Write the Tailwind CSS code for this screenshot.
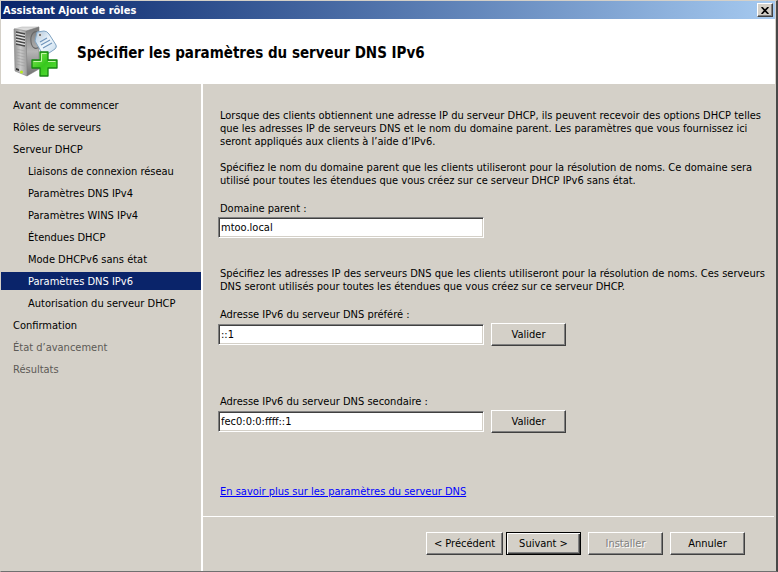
<!DOCTYPE html>
<html lang="fr">
<head>
<meta charset="utf-8">
<meta name="viewport" content="width=device-width, initial-scale=1">
<title>Assistant Ajout de rôles</title>
<script src="https://cdn.jsdelivr.net/npm/@tailwindcss/browser@4"></script>
</head>
<body class="bg-[#d4d0c8]">
<div class="flex min-h-screen flex-col border-t border-r-2 border-b border-l border-t-[#d4d0c8] border-r-[#484848] border-b-[#707070] border-l-[#d4d0c8] bg-[#d4d0c8] font-['DejaVu_Sans_Condensed','DejaVu_Sans',sans-serif] text-[11px] leading-[13px] text-black">
  <div class="mr-px flex h-[18px] items-center justify-between bg-linear-to-r from-[#0a246a] to-[#a6caf0] pr-[2px] pl-[2px] text-white">
    <span class="font-bold">Assistant Ajout de rôles</span>
    <button type="button" aria-label="Fermer" class="flex h-[14px] w-4 items-center justify-center border border-t-white border-r-[#404040] border-b-[#404040] border-l-white bg-[#d4d0c8] shadow-[inset_-1px_-1px_0_#808080]">
      <svg class="h-[7px] w-2" viewBox="0 0 8 7" fill="none" stroke="#000" stroke-width="1.7"><path d="M.6 0 7.4 7M7.4 0 .6 7"/></svg>
    </button>
  </div>

  <header class="mr-px flex h-[65px] items-center bg-white pl-[10px]">
    <svg class="h-[52px] w-12 shrink-0" viewBox="0 0 48 52">
      <defs>
        <linearGradient id="front" x1="0" x2="1"><stop offset="0" stop-color="#909090"/><stop offset=".5" stop-color="#c9c9c9"/><stop offset="1" stop-color="#9d9d9d"/></linearGradient>
        <linearGradient id="side" x1="0" x2="0" y1="0" y2="1"><stop offset="0" stop-color="#777"/><stop offset=".5" stop-color="#b5b5b5"/><stop offset="1" stop-color="#707070"/></linearGradient>
        <linearGradient id="plus" x1="0" x2="1" y1="0" y2="1"><stop offset="0" stop-color="#8bea5c"/><stop offset=".5" stop-color="#37c81d"/><stop offset="1" stop-color="#5ce23a"/></linearGradient>
        <linearGradient id="tag" x1="0" x2="1" y1="0" y2="1"><stop offset="0" stop-color="#a9c2d8"/><stop offset=".5" stop-color="#eef6fc"/><stop offset="1" stop-color="#c2d8ea"/></linearGradient>
      </defs>
      <path d="M3 3 11 1h17l-12 4z" fill="#dcdcdc" stroke="#aaa" stroke-width=".5"/>
      <path d="M15 5 28 1v42l-12 7z" fill="url(#side)" stroke="#777" stroke-width=".5"/>
      <path d="M3 3 15 5l1 45L4 45z" fill="url(#front)" stroke="#858585" stroke-width=".6"/>
      <path d="m5 6 9 2M5 9l9 2M5 12l9 2M5 15l9 2M5 18l9 2" stroke="#484848" stroke-width="1.4"/>
      <path d="m5 7.500 9 2M5 10.500l9 2M5 13.500l9 2M5 16.500l9 2" stroke="#efefef" stroke-width=".8"/>
      <path d="m5 23 9 2M5 26l9 2M5 29l9 2M5 32l9 2M5 35l9 2M5 38l9 2" stroke="#a1a1a1" stroke-width=".7"/>
      <path d="m5 42 3 1v2l-3-1z" fill="#333"/>
      <circle cx="10.500" cy="46" r="1.500" fill="#b9ed1b"/>
      <path d="M28 7c-5-4-9 2-8 9s6 8 9 4" fill="none" stroke="#686868" stroke-width="1.100"/>
      <path d="m26 6 7-1q3 0 5 3l7 11q1 2-1 4l-9 6q-2 1-4-2l-7-12z" fill="url(#tag)" stroke="#81a4c2" stroke-width="1" stroke-linejoin="round"/>
      <circle cx="29" cy="9" r="1.700" fill="#777" stroke="#fff" stroke-width=".6"/>
      <path d="m29 16 7-4M30 19l9-5M32 22l9-5" stroke="#7195bb" stroke-width="1.200"/>
      <path d="M29 26h8v8h9v8h-9v8h-8v-8h-8v-8h8z" fill="url(#plus)" stroke="#148510" stroke-width="1.300" stroke-linejoin="round"/>
      <path d="M30.500 35.500h-8M30.500 35.500v-8h5M37 35.500h7.500" fill="none" stroke="#c1f8a6" stroke-width="1"/>
    </svg>
    <h1 class="ml-[18px] pt-0.5 text-[15px] leading-5 font-bold">Spécifier les paramètres du serveur DNS IPv6</h1>
  </header>

  <div class="flex flex-1">
    <nav aria-label="Étapes" class="w-[200px] shrink-0 pt-3">
      <ul class="flex flex-col gap-1 leading-4 whitespace-nowrap">
        <li><a href="#" class="block pt-0.5 pl-3">Avant de commencer</a></li>
        <li><a href="#" class="block pt-0.5 pl-3">Rôles de serveurs</a></li>
        <li><a href="#" class="block pt-0.5 pl-3">Serveur DHCP</a></li>
        <li><a href="#" class="block pt-0.5 pl-[27px]">Liaisons de connexion réseau</a></li>
        <li><a href="#" class="block pt-0.5 pl-[27px]">Paramètres DNS IPv4</a></li>
        <li><a href="#" class="block pt-0.5 pl-[27px]">Paramètres WINS IPv4</a></li>
        <li><a href="#" class="block pt-0.5 pl-[27px]">Étendues DHCP</a></li>
        <li><a href="#" class="block pt-0.5 pl-[27px]">Mode DHCPv6 sans état</a></li>
        <li><a href="#" aria-current="step" class="block bg-[#0a246a] pt-0.5 pl-[27px] text-white">Paramètres DNS IPv6</a></li>
        <li><a href="#" class="block pt-0.5 pl-[27px]">Autorisation du serveur DHCP</a></li>
        <li><a href="#" class="block pt-0.5 pl-3">Confirmation</a></li>
        <li class="pt-0.5 pl-3 text-[#5c5a56]">État d’avancement</li>
        <li class="pt-0.5 pl-3 text-[#5c5a56]">Résultats</li>
      </ul>
    </nav>

    <form class="flex min-w-0 flex-1 flex-col border-l-2 border-white">
      <main class="flex-1 pt-[25px] pl-[15px]">
        <div class="pl-[2px] whitespace-nowrap">
          <p>Lorsque des clients obtiennent une adresse IP du serveur DHCP, ils peuvent recevoir des options DHCP telles<br>que les adresses IP de serveurs DNS et le nom du domaine parent. Les paramètres que vous fournissez ici<br>seront appliqués aux clients à l’aide d’IPv6.</p>
          <p class="mt-[13px]">Spécifiez le nom du domaine parent que les clients utiliseront pour la résolution de noms. Ce domaine sera<br>utilisé pour toutes les étendues que vous créez sur ce serveur DHCP IPv6 sans état.</p>
        </div>
        <label for="domain" class="mt-[15px] block pl-[2px]">Domaine parent :</label>
        <input id="domain" type="text" value="mtoo.local" class="mt-[2px] block h-[21px] w-[266px] border border-t-[#808080] border-r-white border-b-white border-l-[#808080] bg-white pl-[2px] shadow-[inset_1px_1px_0_#404040,inset_-1px_-1px_0_#d4d0c8]">
        <p class="mt-[29px] pl-[2px] whitespace-nowrap">Spécifiez les adresses IP des serveurs DNS que les clients utiliseront pour la résolution de noms. Ces serveurs<br>DNS seront utilisés pour toutes les étendues que vous créez sur ce serveur DHCP.</p>
        <label for="dns1" class="mt-[15px] block pl-[2px]">Adresse IPv6 du serveur DNS préféré :</label>
        <div class="mt-[2px] flex items-center gap-[7px]">
          <input id="dns1" type="text" value="::1" class="h-[21px] w-[266px] border border-t-[#808080] border-r-white border-b-white border-l-[#808080] bg-white pl-[2px] shadow-[inset_1px_1px_0_#404040,inset_-1px_-1px_0_#d4d0c8]">
          <button type="button" class="h-[23px] w-[75px] border border-t-white border-r-[#404040] border-b-[#404040] border-l-white shadow-[inset_-1px_-1px_0_#808080]">Valider</button>
        </div>
        <label for="dns2" class="mt-[49px] block pl-[2px]">Adresse IPv6 du serveur DNS secondaire :</label>
        <div class="mt-[2px] flex items-center gap-[7px]">
          <input id="dns2" type="text" value="fec0:0:0:ffff::1" class="h-[21px] w-[266px] border border-t-[#808080] border-r-white border-b-white border-l-[#808080] bg-white pl-[2px] shadow-[inset_1px_1px_0_#404040,inset_-1px_-1px_0_#d4d0c8]">
          <button type="button" class="h-[23px] w-[75px] border border-t-white border-r-[#404040] border-b-[#404040] border-l-white shadow-[inset_-1px_-1px_0_#808080]">Valider</button>
        </div>
        <p class="mt-[52px] pl-[2px]"><a href="#" class="text-[#0000ff] underline">En savoir plus sur les paramètres du serveur DNS</a></p>
      </main>
      <footer class="mr-[2px] flex justify-end border-t border-white pt-[15px] pr-[29px] pb-4">
        <button type="button" class="mr-[3px] h-[23px] w-[77px] border border-t-white border-r-[#404040] border-b-[#404040] border-l-white shadow-[inset_-1px_-1px_0_#808080]">&lt; Précédent</button>
        <button type="submit" class="mr-[7px] h-[23px] w-[75px] border border-black shadow-[inset_1px_1px_0_#fff,inset_-1px_-1px_0_#404040,inset_-2px_-2px_0_#808080]">Suivant &gt;</button>
        <button type="button" disabled class="mr-[7px] h-[23px] w-[75px] border border-t-white border-r-[#404040] border-b-[#404040] border-l-white text-[#808080] shadow-[inset_-1px_-1px_0_#808080] text-shadow-[1px_1px_0_#fff]">Installer</button>
        <button type="button" class="h-[23px] w-[75px] border border-t-white border-r-[#404040] border-b-[#404040] border-l-white shadow-[inset_-1px_-1px_0_#808080]">Annuler</button>
      </footer>
    </form>
  </div>
</div>
</body>
</html>
